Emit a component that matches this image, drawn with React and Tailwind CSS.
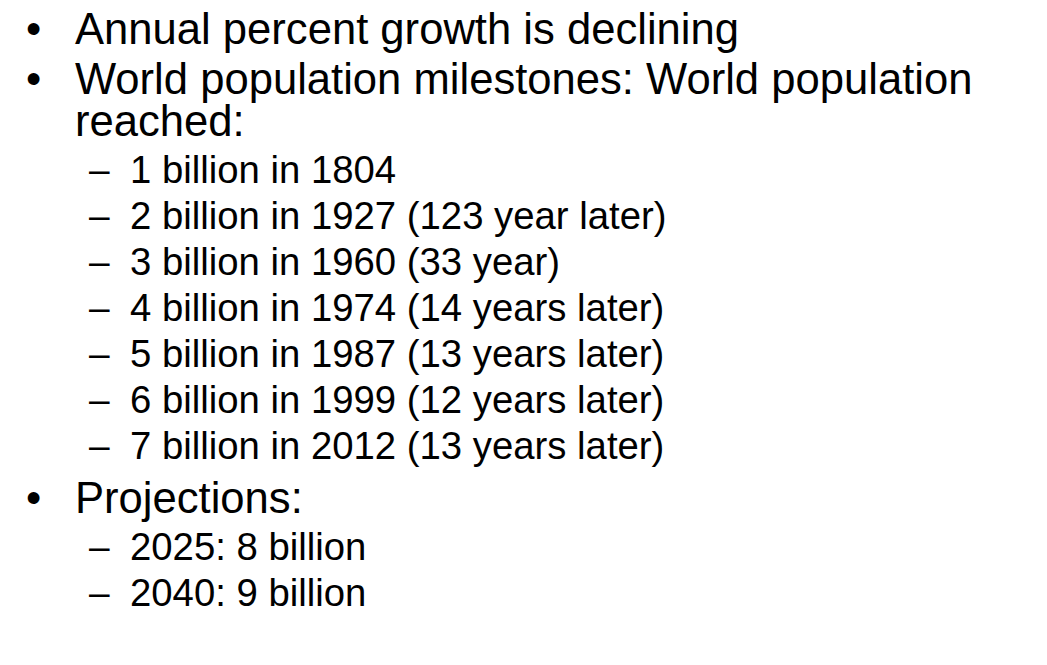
const milestones = [
  '1 billion in 1804',
  '2 billion in 1927 (123 year later)',
  '3 billion in 1960 (33 year)',
  '4 billion in 1974 (14 years later)',
  '5 billion in 1987 (13 years later)',
  '6 billion in 1999 (12 years later)',
  '7 billion in 2012 (13 years later)',
];

const projections = ['2025: 8 billion', '2040: 9 billion'];

const Bullet = ({ children, sub }) => (
  <div className="flex">
    <div className="w-[75px] shrink-0 pl-[26px] text-[43.5px] leading-[42px]">•</div>
    <div className="flex-1">
      <div className="text-[43.6px] leading-[42px]">{children}</div>
      {sub && (
        <div className="mt-[5px]">
          {sub.map((s) => (
            <div key={s} className="flex text-[38.3px] leading-[46px]">
              <div className="w-[55px] shrink-0 pl-[14px] text-[37px]">–</div>
              <div>{s}</div>
            </div>
          ))}
        </div>
      )}
    </div>
  </div>
);

const App = () => {
  return (
    <div className="w-[1047px] h-[665px] bg-white text-black overflow-hidden font-['Liberation_Sans',Arial,sans-serif]">
      <div className="pt-[8px] pr-[40px] flex flex-col gap-[8px]">
        <Bullet>Annual percent growth is declining</Bullet>
        <Bullet sub={milestones}>World population milestones: World population reached:</Bullet>
        <Bullet sub={projections}>Projections:</Bullet>
      </div>
    </div>
  );
};

export default App;
